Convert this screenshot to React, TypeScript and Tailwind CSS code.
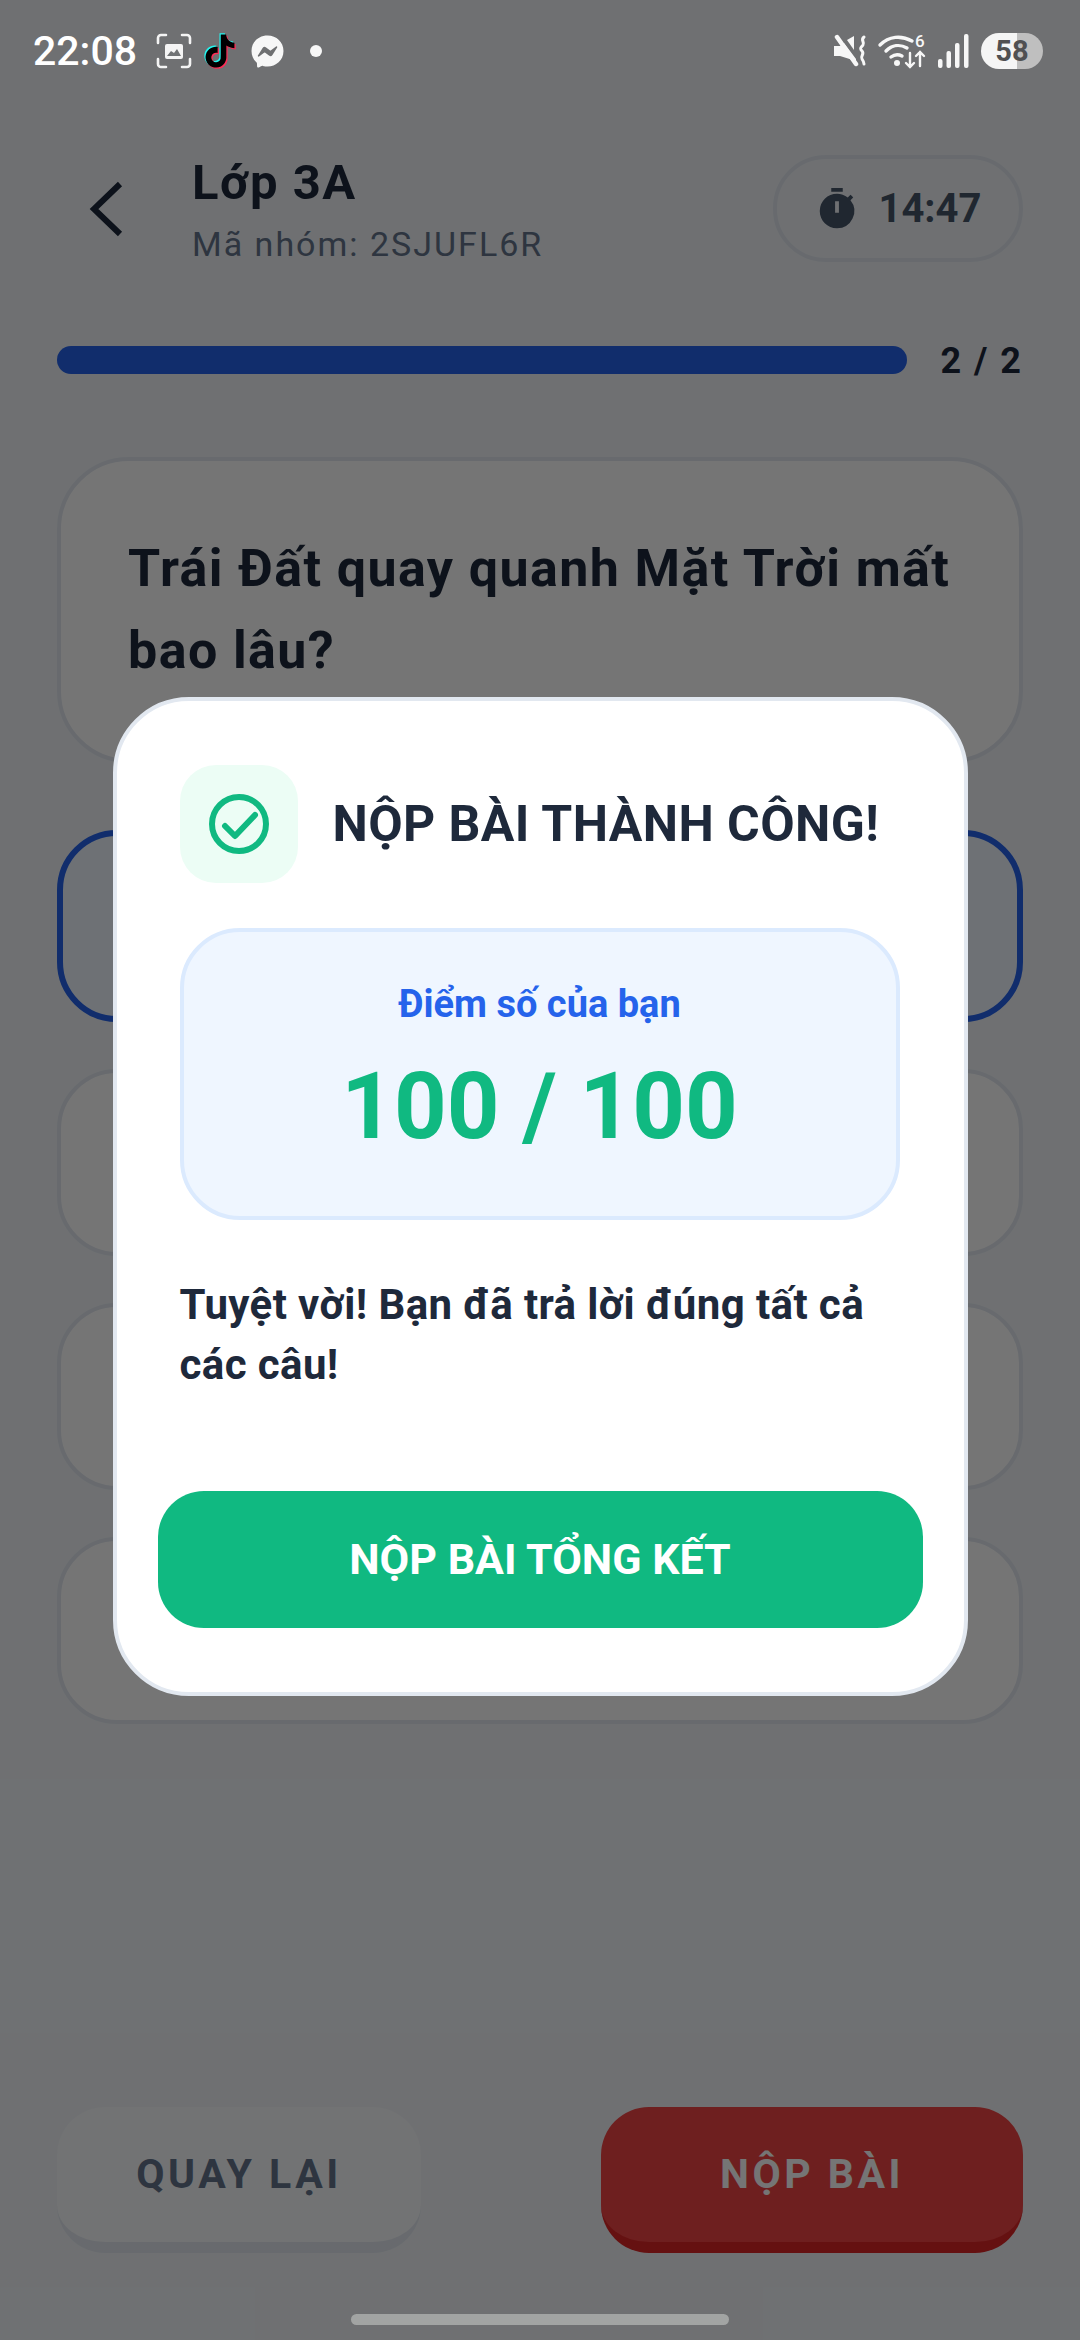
import React from "react";
import { MdTimer } from "react-icons/md";
import { FaFacebookMessenger } from "react-icons/fa";

const TIKTOK =
  "M12.525.02c1.31-.02 2.61-.01 3.91-.02.08 1.53.63 3.09 1.75 4.17 1.12 1.11 2.7 1.62 4.24 1.79v4.03c-1.44-.05-2.89-.35-4.2-.97-.57-.26-1.1-.59-1.62-.93-.01 2.92.01 5.84-.02 8.75-.08 1.4-.54 2.79-1.35 3.94-1.31 1.92-3.58 3.17-5.91 3.21-1.43.08-2.86-.31-4.08-1.03-2.02-1.19-3.44-3.37-3.65-5.71-.02-.5-.03-1-.01-1.49.18-1.9 1.12-3.72 2.58-4.96 1.66-1.44 3.98-2.13 6.15-1.72.02 1.48-.04 2.96-.04 4.44-.99-.32-2.15-.23-3.02.37-.63.41-1.11 1.04-1.36 1.75-.21.51-.15 1.07-.14 1.61.24 1.64 1.82 3.02 3.5 2.87 1.12-.01 2.19-.66 2.77-1.61.19-.33.4-.67.41-1.06.1-1.79.06-3.57.07-5.36.01-4.03-.01-8.05.02-12.07z";

function StatusBar() {
  return (
    <div className="absolute left-0 top-0 z-20 flex h-[102px] w-full items-center pl-[33px] pr-[37px] text-white">
      <span className="w-[104px] text-[41px] leading-none font-medium whitespace-nowrap">22:08</span>
      <svg className="ml-[19px] h-[36px] w-[36px]" viewBox="0 0 36 36" fill="none">
        <path d="M2 10V5a3 3 0 0 1 3-3h5M26 2h5a3 3 0 0 1 3 3v5M34 26v5a3 3 0 0 1-3 3h-5M10 34H5a3 3 0 0 1-3-3v-5" stroke="#f4f4f4" strokeWidth="2.6" strokeLinecap="round" />
        <path d="M9 13a2 2 0 0 1 2-2h14a2 2 0 0 1 2 2v11a2 2 0 0 1-2 2H11a2 2 0 0 1-2-2z" fill="#f4f4f4" />
        <path d="M11 23l4-5 3 2 3-4 4 7z" fill="#707274" />
      </svg>
      <svg className="ml-[10px] mt-[-1px] h-[40px] w-[36px]" viewBox="-1 -1 26 26">
        <path d={TIKTOK} fill="#25f4ee" transform="translate(-0.9 -0.9)" />
        <path d={TIKTOK} fill="#fe2c55" transform="translate(0.9 0.9)" />
        <path d={TIKTOK} fill="#000000" />
      </svg>
      <FaFacebookMessenger className="ml-[13px] h-[33px] w-[33px] text-[#f7f7f7]" />
      <span className="ml-[26px] h-[12px] w-[12px] rounded-full bg-[#f7f7f7]" />
      <div className="ml-auto flex items-center">
        <svg className="h-[34px] w-[34px]" viewBox="0 0 34 34" fill="none">
          <path d="M1 12h6l4-3 12 16v2L7 22H1z" fill="#f7f7f7" />
          <path d="M14 6l7-4v14z" fill="#f7f7f7" />
          <path d="M4 3l19 27" stroke="#f7f7f7" strokeWidth="4.5" strokeLinecap="round" />
          <path d="M31 3c-4 3 1 5-1 8s-4 3-1 6-2 5 0 8 2 3 2 5" stroke="#f7f7f7" strokeWidth="3" strokeLinecap="round" />
        </svg>
        <svg className="ml-[12px] h-[36px] w-[47px] overflow-visible" viewBox="0 0 47 36" fill="none">
          <path d="M1 12C10 3 22 2 33 8" stroke="#f7f7f7" strokeWidth="3.4" strokeLinecap="round" />
          <path d="M7 18c6-6 14-7 21-3" stroke="#f7f7f7" strokeWidth="3.4" strokeLinecap="round" />
          <path d="M12 24c4-3 7-3 11-1" stroke="#f7f7f7" strokeWidth="3.4" strokeLinecap="round" />
          <circle cx="18" cy="30" r="3" fill="#f7f7f7" />
          <path d="M31 20v14M27 30l4 4 4-4M41 33V19M37 23l4-4 4 4" stroke="#f7f7f7" strokeWidth="2.4" strokeLinecap="round" />
          <text x="36" y="14" fontSize="17" fontWeight="500" fill="#f7f7f7" fontFamily="Roboto, sans-serif">6</text>
        </svg>
        <svg className="ml-[12px] h-[34px] w-[31px]" viewBox="0 0 31 34">
          <rect x="0" y="25" width="4.5" height="9" rx="2" fill="#f7f7f7" />
          <rect x="8.5" y="17" width="4.5" height="17" rx="2" fill="#f7f7f7" />
          <rect x="17" y="9" width="4.5" height="25" rx="2" fill="#f7f7f7" />
          <rect x="26" y="0" width="4.5" height="34" rx="2" fill="#f7f7f7" />
        </svg>
        <div className="ml-[12px] flex h-[36px] w-[62px] items-center justify-center rounded-full bg-[linear-gradient(90deg,#f5f5f5_58%,#bfbfbf_58%)]">
          <span className="text-[29px] leading-none font-bold text-[#505052]">58</span>
        </div>
      </div>
    </div>
  );
}

function Option({ selected = false }: { selected?: boolean }) {
  return selected ? (
    <div className="h-[192px] rounded-[60px] border-[6px] border-[#2563eb] bg-[#eff6ff]" />
  ) : (
    <div className="h-[187px] rounded-[60px] border-4 border-[#e2e8f0] bg-white" />
  );
}

export default function App() {
  return (
    <div className="relative h-[2340px] w-[1080px] overflow-hidden bg-[#f1f5f9] font-['Roboto',sans-serif]">
      <StatusBar />

      <div className="flex h-full flex-col px-[57px] pt-[155px] pb-[87px]">
        <header className="flex h-[107px] items-start">
          <svg className="ml-[32px] mt-[26px] h-[56px] w-[34px]" viewBox="0 0 34 56" fill="none">
            <path d="M31 3L5 28l26 25" stroke="#1e293b" strokeWidth="6" />
          </svg>
          <div className="ml-[69px]">
            <h1 className="text-[49px] leading-[56px] font-bold tracking-[1.5px] text-[#1e293b]">Lớp 3A</h1>
            <p className="mt-[12px] text-[34px] leading-[42px] tracking-[2px] text-[#64748b]">Mã nhóm: 2SJUFL6R</p>
          </div>
          <div className="ml-auto flex h-[107px] w-[250px] items-center justify-center gap-[18px] rounded-[53px] border-4 border-[#e2e8f0] bg-[#f1f5f9]">
            <MdTimer className="h-[46px] w-[46px] text-[#475569]" />
            <span className="text-[40px] leading-none font-bold text-[#475569]">14:47</span>
          </div>
        </header>

        <div className="mt-[84px] flex h-[28px] items-center">
          <div className="h-[28px] w-[850px] rounded-full bg-[#2563eb]" />
          <span className="ml-auto mt-[1px] text-[36px] leading-none font-bold tracking-[2px] text-[#1e293b]">2 / 2</span>
        </div>

        <section className="mt-[83px] h-[306px] rounded-[72px] border-4 border-[#e2e8f0] bg-white pl-[67px] pr-[40px] pt-[67px]">
          <h2 className="text-[52px] leading-[82px] font-bold tracking-[1.4px] text-[#1e293b]">Trái Đất quay quanh Mặt Trời mất bao lâu?</h2>
        </section>

        <div className="mt-[67px] flex flex-col gap-[47px]">
          <Option selected />
          <Option />
          <Option />
          <Option />
        </div>

        <footer className="mt-auto flex items-start justify-between">
          <button className="flex h-[146px] w-[364px] items-center justify-center rounded-[48px] border-b-[11px] border-[#e2e8f0] bg-[#f8fafc] text-[41px] font-bold tracking-[3.5px] text-[#64748b]">
            QUAY LẠI
          </button>
          <button className="flex h-[146px] w-[422px] items-center justify-center rounded-[48px] border-b-[11px] border-[#dc2626] bg-[#ef4444] text-[41px] font-bold tracking-[3.5px] text-white">
            NỘP BÀI
          </button>
        </footer>
      </div>

      <div className="absolute inset-0 z-10 flex items-center justify-center bg-black/[0.54] pt-[53px]">
        <div className="flex h-[999px] w-[855px] flex-col rounded-[76px] border-4 border-[#e2e8f0] bg-white px-[63px] pt-[64px]">
          <div className="flex items-center gap-[35px]">
            <div className="flex h-[118px] w-[118px] items-center justify-center rounded-[36px] bg-[#ecfdf5]">
              <svg className="h-[60px] w-[60px]" viewBox="0 0 60 60" fill="none">
                <circle cx="30" cy="30" r="27" stroke="#10b981" strokeWidth="6" />
                <path d="M16 32l10 10 20-21" stroke="#10b981" strokeWidth="6" strokeLinecap="round" strokeLinejoin="round" />
              </svg>
            </div>
            <h2 className="text-[50px] leading-none font-bold tracking-[0.4px] whitespace-nowrap text-[#1e293b]">NỘP BÀI THÀNH CÔNG!</h2>
          </div>

          <div className="mt-[45px] flex h-[292px] w-[720px] flex-col items-center rounded-[60px] border-4 border-[#dbeafe] bg-[#eff6ff] pt-[50px]">
            <p className="text-[38px] leading-[44px] font-bold text-[#2563eb]">Điểm số của bạn</p>
            <p className="mt-[31px] text-[92px] leading-[100px] font-bold text-[#10b981]">100 / 100</p>
          </div>

          <p className="mt-[55px] text-[42px] leading-[60px] font-bold tracking-[0.4px] text-[#1e293b]">
            Tuyệt vời! Bạn đã trả lời đúng tất cả các câu!
          </p>

          <button className="mx-[-22px] mt-[96px] flex h-[137px] shrink-0 items-center justify-center rounded-[46px] bg-[#10b981] text-[43px] font-bold text-white">
            NỘP BÀI TỔNG KẾT
          </button>
        </div>
      </div>

      <div className="absolute top-[2314px] left-[351px] z-20 h-[11px] w-[378px] rounded-full bg-[#a2a4a3]" />
    </div>
  );
}
